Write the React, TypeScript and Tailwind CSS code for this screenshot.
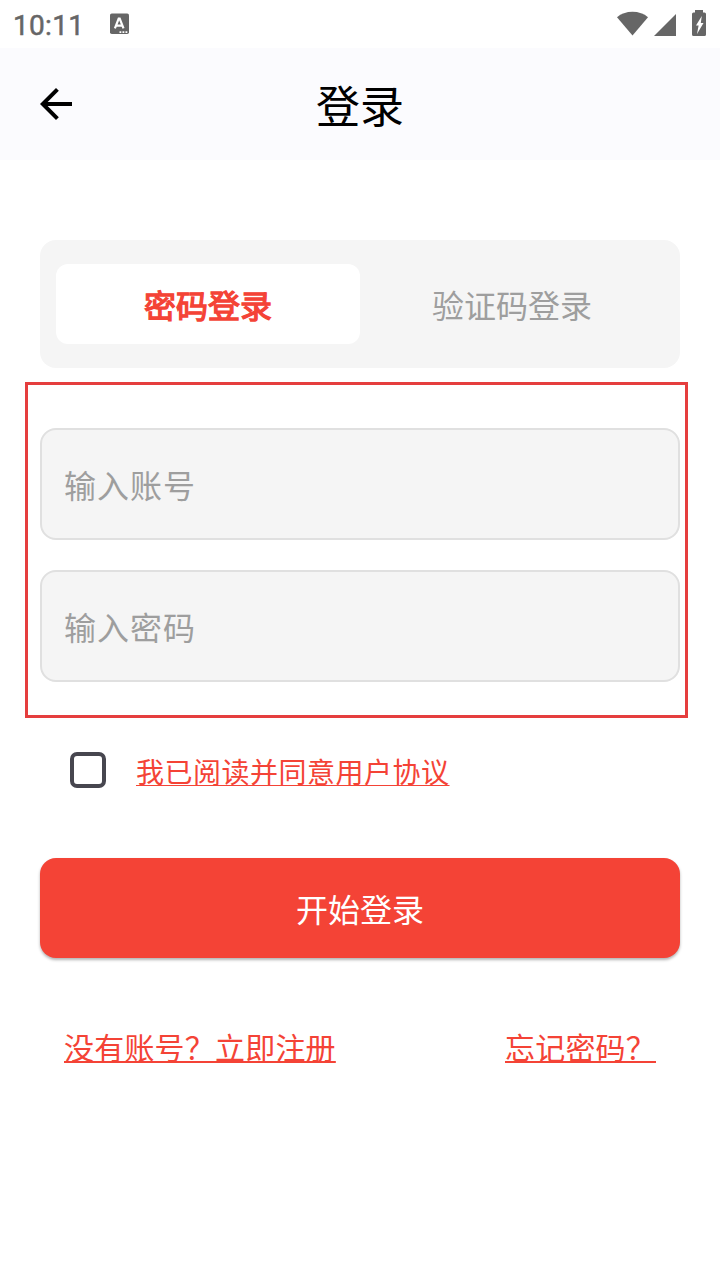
import { useState } from "react";

function StatusBar() {
  return (
    <div className="flex h-12 items-center bg-white text-[#666666]">
      <span className="ml-[13px] w-[97px] pt-[3px] font-['Roboto',sans-serif] text-[28px] leading-none font-normal tracking-[0.3px] [-webkit-text-stroke:0.5px_#666666]">
        10:11
      </span>
      <svg className="h-12 w-[19px]" viewBox="0 0 19 48" fill="none">
        <rect y="13.500" width="19" height="20.500" rx="1.800" fill="#666666" />
        <path
          d="M4.900 28.300 8.700 18.600h1L13.500 28.300M6.400 25.600h5.600"
          stroke="#fff"
          strokeWidth="2.200"
        />
        <path d="M9.500 31.200h1.800v1.800h-1.800zM12.500 31.200h1.800v1.800h-1.800zM15.500 31.200h1.800v1.800h-1.800z" fill="#fff" />
      </svg>
      <svg className="ml-auto mr-[13px] h-12 w-[90px]" viewBox="617 0 90 48" fill="#666666">
        <path d="M632.5 35.5 617 17.2C621 13.6 626.500 11.7 632.500 11.700S644 13.600 648 17.200Z" />
        <path d="M654 36 676 14v22Z" />
        <path
          fillRule="evenodd"
          d="M695 10h8v2.500h1.500q1.500 0 1.500 1.500v20.500q0 1.500-1.500 1.500h-11q-1.500 0-1.500-1.500V14q0-1.500 1.500-1.500H695ZM701.800 16l-5.800 9.500h2.600l-1.600 8.500 6.500-11h-2.700Z"
        />
      </svg>
    </div>
  );
}

function Header() {
  return (
    <header className="grid h-28 grid-cols-[1fr_auto_1fr] items-center bg-[#fbfbfe] px-10 text-black">
      <button type="button" aria-label="返回" className="justify-self-start">
        <svg className="h-8 w-8" viewBox="4 4 16 16">
          <path d="M20 11H7.830l5.590-5.590L12 4l-8 8 8 8 1.410-1.410L7.830 13H20v-2z" />
        </svg>
      </button>
      <h1 className="text-[44px] leading-[64px]">登录</h1>
    </header>
  );
}

function Field({ label, type }: { label: string; type: string }) {
  return (
    <input
      type={type}
      placeholder={label}
      className="block h-28 w-full rounded-2xl border-2 border-[#e0e0e0] bg-[#f5f5f5] px-[22px] text-[32px] tracking-[1px] text-black outline-none placeholder:text-[#9e9e9e] placeholder:opacity-100"
    />
  );
}

const tabs = ["密码登录", "验证码登录"];

export default function App() {
  const [tab, setTab] = useState(0);
  return (
    <div className="flex min-h-[1280px] w-[720px] flex-col bg-white font-['Noto_Sans_CJK_SC',sans-serif]">
      <StatusBar />
      <Header />
      <main className="flex flex-col pt-20">
        <div className="mx-10 grid h-32 grid-cols-2 rounded-2xl bg-[#f5f5f5] px-4 py-6">
          {tabs.map((name, i) => (
            <button
              key={name}
              type="button"
              onClick={() => setTab(i)}
              className={
                i === tab
                  ? "rounded-xl bg-white text-[32px] font-normal text-[#f44336] [-webkit-text-stroke:1.3px_#f44336]"
                  : "rounded-xl text-[32px] text-[#9e9e9e]"
              }
            >
              {name}
            </button>
          ))}
        </div>

        <section className="mr-8 ml-[25px] mt-3.5 flex h-[336px] flex-col gap-[30px] border-3 border-[#e53e3e] pt-[43px] pr-[5px] pl-3">
          <Field label="输入账号" type="text" />
          <Field label="输入密码" type="password" />
        </section>

        <label className="mt-[34px] ml-[70px] flex h-9 items-center gap-[30px]">
          <input
            type="checkbox"
            className="h-9 w-9 appearance-none rounded-[7px] border-4 border-[#47464f] bg-white checked:bg-[#f44336]"
          />
          <span className="pt-0.5 text-[28px] leading-9 tracking-[0.5px] text-[#f44336] underline decoration-1 underline-offset-[2px] [text-decoration-skip-ink:none]">
            我已阅读并同意用户协议
          </span>
        </label>

        <button
          type="button"
          className="mx-10 mt-[70px] h-[100px] rounded-2xl bg-[#f44336] text-[32px] text-white shadow-[0_2px_3px_rgba(0,0,0,0.3)]"
        >
          开始登录
        </button>

        <div className="mt-[64px] flex justify-between px-16 text-[30px] leading-[48px] tracking-[0.2px] text-[#f44336] [text-decoration-skip-ink:none]">
          <a href="#register" className="underline decoration-2 underline-offset-[2px]">没有账号？立即注册</a>
          <a href="#reset" className="underline decoration-2 underline-offset-[2px]">忘记密码？</a>
        </div>
      </main>
    </div>
  );
}
